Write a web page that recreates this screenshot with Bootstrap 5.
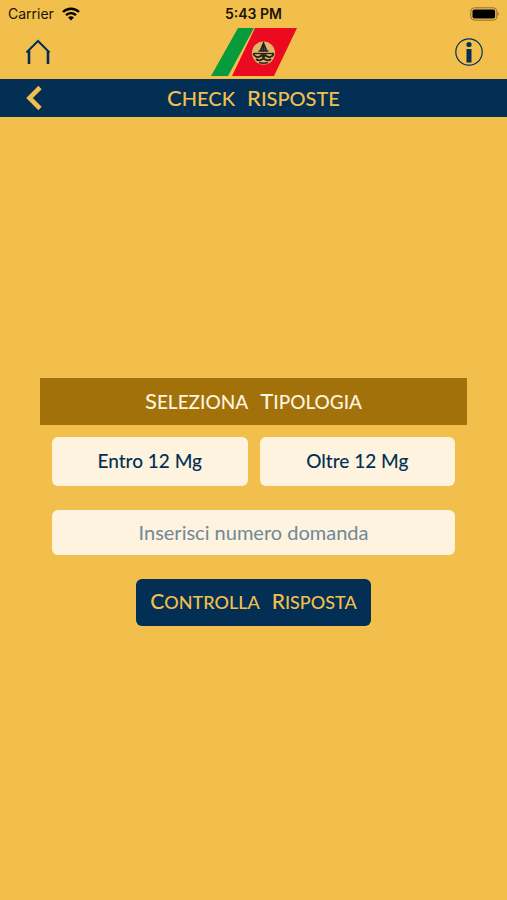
<!DOCTYPE html>
<html lang="it">
<head>
<meta charset="utf-8">
<meta name="viewport" content="width=device-width, initial-scale=1">
<title>Check Risposte</title>
<link href="https://cdn.jsdelivr.net/npm/bootstrap@5.3.0/dist/css/bootstrap.min.css" rel="stylesheet">
<style>
  :root { --navy: #032f55; --gold: #f2bf4d; --cream: #fdf3df; --brown: #a27109; }
  body { background: var(--gold); color: var(--navy); font-family: Lato, "Liberation Sans", sans-serif; }
  .status-bar { height: 27px; padding: 0 8px; font: 14px/27px Inter, "Liberation Sans", sans-serif; color: #1a1405; }
  .status-time { font-weight: 600; }
  .app-header { height: 52px; padding: 0 24px 2px; }
  .icon-btn { color: var(--navy); line-height: 0; }
  .title-bar { height: 38px; padding: 0 24px; background: var(--navy); color: var(--gold); }
  .back-btn { color: var(--gold); line-height: 0; }
  .caps { font-size: 18px; line-height: 24px; font-weight: 500; text-transform: uppercase; display: inline-flex; align-items: baseline; gap: 12px; margin: 0; }
  .caps b { font-size: 21px; font-weight: inherit; }
  .title-bar .caps { font-size: 20px; }
  .title-bar .caps b { font-size: 22px; }
  .banner .caps { font-size: 19px; }
  .banner .caps b { font-size: 22px; }
  .form-area { padding: 0 40px 14px; }
  .banner { height: 47px; background: var(--brown); color: var(--cream); }
  .fields { padding: 12px 12px 0; }
  .choices { gap: 12px; }
  .choice { --bs-btn-bg: var(--cream); --bs-btn-color: var(--navy); --bs-btn-hover-bg: #fff; --bs-btn-hover-color: var(--navy); height: 49px; font-size: 19px; line-height: 24px; font-weight: 500; border: 0; }
  .question, .question:focus { height: 45px; font-size: 20px; line-height: 24px; background: var(--cream); color: var(--navy); border: 0; }
  .question::placeholder { color: #72879a; opacity: 1; }
  .submit { --bs-btn-bg: var(--navy); --bs-btn-color: var(--gold); --bs-btn-hover-bg: #074477; --bs-btn-hover-color: var(--gold); height: 47px; padding: 0 14px; border: 0; }
</style>
</head>
<body class="min-vh-100 d-flex flex-column">
<div class="status-bar row g-0">
  <div class="col d-flex align-items-center gap-2">
    <span>Carrier</span>
    <svg width="18" height="14" viewBox="0 0 18 14" fill="none" stroke="#000" stroke-width="2.4" aria-hidden="true"><path d="M1 5C5.500.6 12.500.6 17 5M4 8.200C7 5.400 11 5.400 14 8.200"/><path d="M9 13.500 6.100 10.500Q9 8.200 11.900 10.500Z" fill="#000" stroke="none"/></svg>
  </div>
  <div class="col-auto status-time">5:43 PM</div>
  <div class="col d-flex align-items-center justify-content-end">
    <svg width="29" height="14" viewBox="0 0 29 14" aria-hidden="true"><rect x=".8" y=".8" width="26" height="12.400" rx="3.500" fill="none" stroke="#8d712f"/><rect x="2.500" y="2.500" width="22.600" height="9" rx="1.800"/><path d="M27.600 4.800Q30 7 27.600 9.200Z" fill="#8d712f"/></svg>
  </div>
</div>
<header class="app-header d-flex align-items-center justify-content-between">
  <button type="button" class="icon-btn btn p-0 border-0" aria-label="Home">
    <svg width="28" height="28" viewBox="0 0 28 28" fill="none" stroke="currentColor" stroke-width="2"><path d="M2.500 14.500 14 3 25.500 14.500"/><path d="M5 12.500V26M24 13V26" stroke-width="2.600"/></svg>
  </button>
  <svg width="88" height="50" viewBox="0 0 88 50" role="img" aria-label="Logo">
    <path d="M28 1H44L18 49H1Z" fill="#079b3c"/>
    <path d="M45 1H87L64 49H22Z" fill="#ec0a20"/>
    <circle cx="53.500" cy="26" r="11.500" fill="#e3b56a"/>
    <g fill="none" stroke="#24211b" stroke-width="1.400">
      <path d="M53.500 15V24M50.500 23 53.500 16 56.500 23M48.500 24H58.500"/>
      <path d="M43 26.500H64"/>
      <path d="M43.500 27C45 31 50 31 52 27.500M63.500 27C62 31 57 31 55 27.500" stroke-width="1.800"/>
      <path d="M46 32Q49 35 53.500 31.500 58 35 61 32" stroke-width="1.800"/>
      <path d="M49 35.500Q53.500 37 58 35.500"/>
    </g>
    <path d="M53.500 16 50 24H57Z" fill="#24211b" opacity=".7"/>
    <circle cx="53.500" cy="29" r="2" fill="#24211b"/>
  </svg>
  <button type="button" class="icon-btn btn p-0 border-0" aria-label="Informazioni">
    <svg width="28" height="28" viewBox="0 0 28 28"><circle cx="14" cy="14" r="13.200" fill="none" stroke="currentColor" stroke-width="1.200"/><circle cx="14" cy="6.500" r="2.600" fill="currentColor"/><path d="M11.500 11H16.500V24.500H11.500Z" fill="currentColor"/></svg>
  </button>
</header>
<nav class="title-bar row g-0 align-items-center">
  <div class="col d-flex"><button type="button" class="back-btn btn p-0 border-0" aria-label="Indietro">
    <svg width="20" height="26" viewBox="0 0 20 26" fill="none" stroke="#f2bf4d" stroke-width="4.600"><path d="M16 2.500 5.500 13 16 23.500"/></svg>
  </button></div>
  <h1 class="caps col-auto"><span><b>C</b>heck</span> <span><b>R</b>isposte</span></h1>
  <div class="col"></div>
</nav>
<main class="form-area flex-grow-1 d-flex flex-column justify-content-center">
  <form>
    <div class="banner d-flex align-items-center justify-content-center"><h2 class="caps"><span><b>S</b>eleziona</span> <span><b>T</b>ipologia</span></h2></div>
    <div class="fields">
      <div class="choices d-flex mb-4">
        <button type="button" class="btn choice flex-fill w-50">Entro 12 Mg</button>
        <button type="button" class="btn choice flex-fill w-50">Oltre 12 Mg</button>
      </div>
      <input type="text" inputmode="numeric" class="form-control question text-center mb-4" placeholder="Inserisci numero domanda" aria-label="Inserisci numero domanda">
      <div class="text-center"><button type="submit" class="btn submit"><span class="caps"><span><b>C</b>ontrolla</span> <span><b>R</b>isposta</span></span></button></div>
    </div>
  </form>
</main>
<script src="https://cdn.jsdelivr.net/npm/bootstrap@5.3.0/dist/js/bootstrap.bundle.min.js"></script>
</body>
</html>
